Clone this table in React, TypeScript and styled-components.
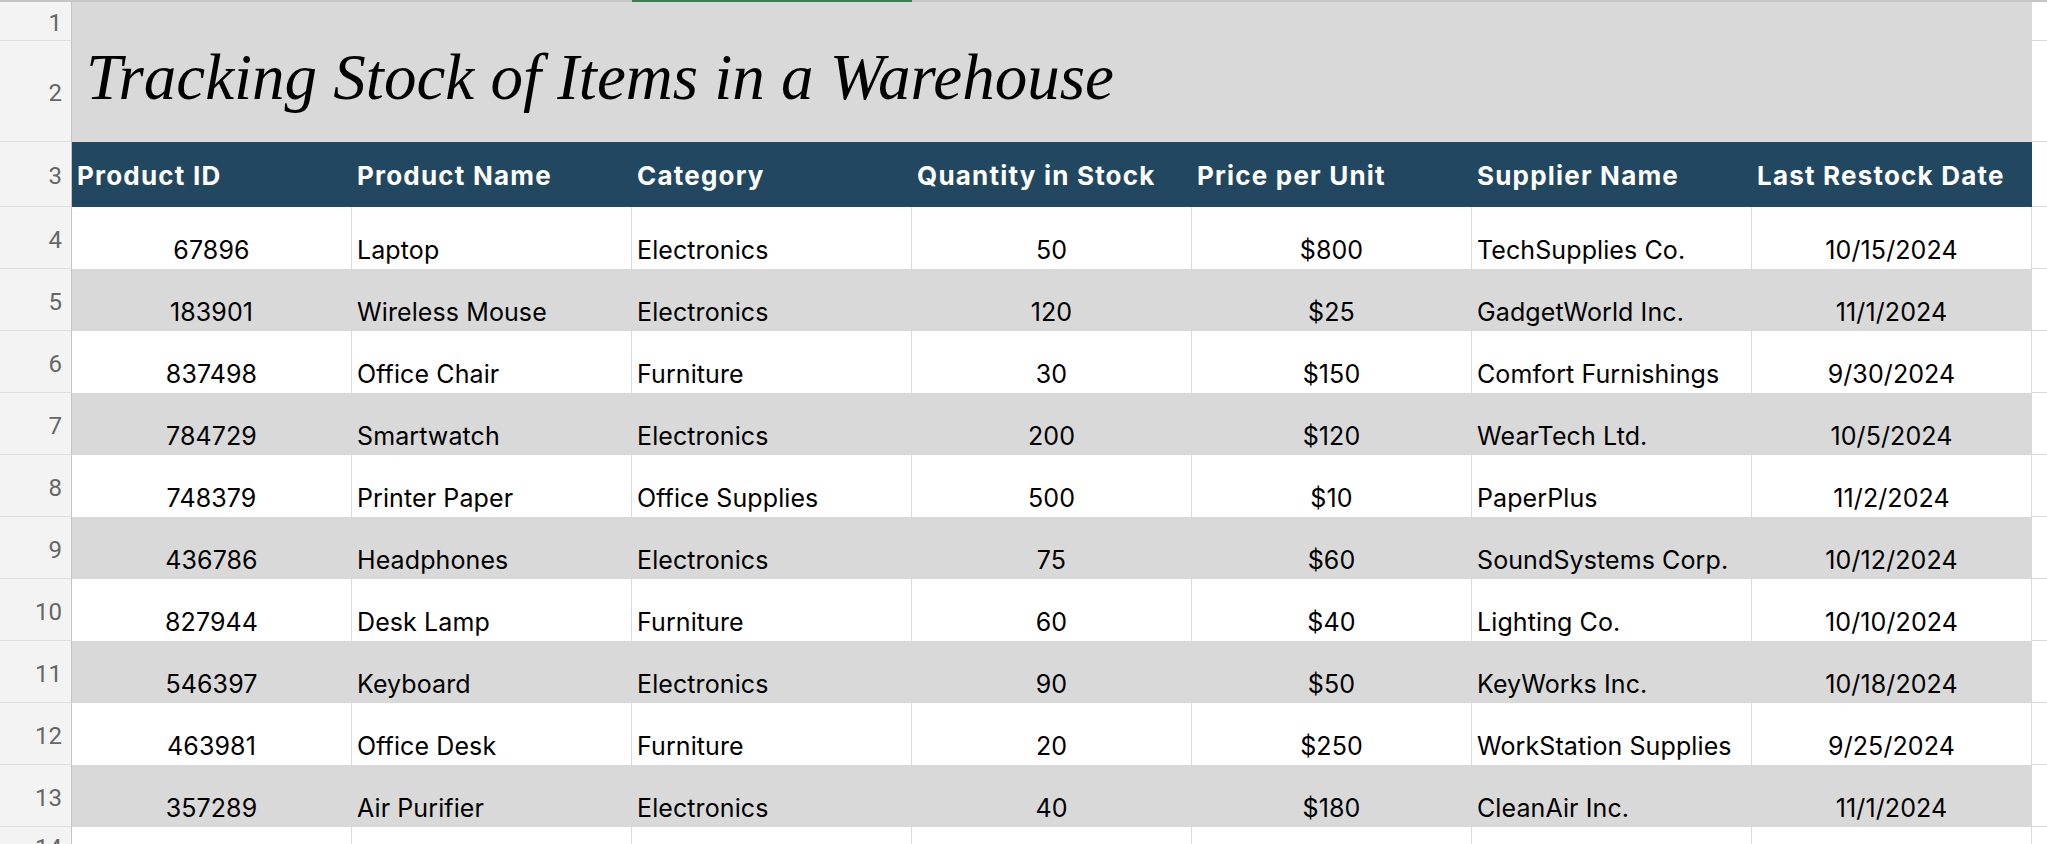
import React from "react";
import styled, { createGlobalStyle } from "styled-components";

const COLS = "72px repeat(7, 280px) 1fr";

const GlobalStyle = createGlobalStyle`
  * { box-sizing: border-box; }
  html, body {
    margin: 0;
    padding: 0;
    background: #ffffff;
    overflow: hidden;
  }
`;

const Sheet = styled.div`
  display: flex;
  flex-direction: column;
  height: 844px;
  overflow: hidden;
  background: #ffffff;
  color: #000000;
  font-family: Inter, "Open Sans", sans-serif;
`;

const ColumnStrip = styled.div`
  display: grid;
  grid-template-columns: ${COLS};
  flex: none;
  height: 2px;
  background: #c6c6c6;
`;

const StripSeg = styled.div<{ $active?: boolean }>`
  background: ${(p) => (p.$active ? "#3c7d4c" : "transparent")};
`;

const Row = styled.div<{ $h: number }>`
  display: grid;
  grid-template-columns: ${COLS};
  flex: none;
  height: ${(p) => p.$h}px;
`;

const RowHead = styled.div`
  display: flex;
  align-items: center;
  justify-content: flex-end;
  padding: 4px 9px 0 0;
  background: #f3f3f3;
  border-right: 1px solid #c4c4c4;
  border-bottom: 1px solid #dedede;
  color: #666666;
  font-family: Roboto, "Liberation Sans", sans-serif;
  font-size: 24px;
  line-height: 1;
`;

const Band = styled.div`
  grid-column: 2 / 9;
  display: flex;
  align-items: flex-start;
  padding: 4px 0 0 14px;
  background: #d9d9d9;
`;

const Title = styled.h1`
  margin: 0;
  font-family: "Liberation Serif", "Times New Roman", serif;
  font-style: italic;
  font-weight: 400;
  font-size: 65px;
  line-height: 1;
  white-space: nowrap;
`;

const Spare = styled.div`
  border-bottom: 1px solid #dadada;
`;

const HeadCell = styled.div`
  display: flex;
  align-items: center;
  padding: 2px 5px 0;
  background: #224761;
  color: #ffffff;
  font-size: 26px;
  font-weight: 700;
  letter-spacing: 1.2px;
  line-height: 1;
  white-space: nowrap;
`;

const Cell = styled.div<{ $align: string; $shade: boolean }>`
  display: flex;
  align-items: flex-end;
  justify-content: ${(p) => (p.$align === "center" ? "center" : "flex-start")};
  padding: 0 5px 6px;
  background: ${(p) => (p.$shade ? "#d9d9d9" : "#ffffff")};
  border-right: 1px solid ${(p) => (p.$shade ? "#d9d9d9" : "#dadada")};
  font-size: 25px;
  letter-spacing: 0.1px;
  line-height: 1;
  white-space: nowrap;
`;

const headers = [
  "Product ID",
  "Product Name",
  "Category",
  "Quantity in Stock",
  "Price per Unit",
  "Supplier Name",
  "Last Restock Date",
];

const aligns = ["center", "left", "left", "center", "center", "left", "center"];

const items = [
  ["67896", "Laptop", "Electronics", "50", "$800", "TechSupplies Co.", "10/15/2024"],
  ["183901", "Wireless Mouse", "Electronics", "120", "$25", "GadgetWorld Inc.", "11/1/2024"],
  ["837498", "Office Chair", "Furniture", "30", "$150", "Comfort Furnishings", "9/30/2024"],
  ["784729", "Smartwatch", "Electronics", "200", "$120", "WearTech Ltd.", "10/5/2024"],
  ["748379", "Printer Paper", "Office Supplies", "500", "$10", "PaperPlus", "11/2/2024"],
  ["436786", "Headphones", "Electronics", "75", "$60", "SoundSystems Corp.", "10/12/2024"],
  ["827944", "Desk Lamp", "Furniture", "60", "$40", "Lighting Co.", "10/10/2024"],
  ["546397", "Keyboard", "Electronics", "90", "$50", "KeyWorks Inc.", "10/18/2024"],
  ["463981", "Office Desk", "Furniture", "20", "$250", "WorkStation Supplies", "9/25/2024"],
  ["357289", "Air Purifier", "Electronics", "40", "$180", "CleanAir Inc.", "11/1/2024"],
];

export default function App() {
  return (
    <>
      <GlobalStyle />
      <Sheet>
        <ColumnStrip>
          <StripSeg />
          <StripSeg />
          <StripSeg />
          <StripSeg $active />
        </ColumnStrip>

        <Row $h={39}>
          <RowHead>1</RowHead>
          <Band />
          <Spare />
        </Row>

        <Row $h={101}>
          <RowHead>2</RowHead>
          <Band>
            <Title>Tracking Stock of Items in a Warehouse</Title>
          </Band>
          <Spare />
        </Row>

        <Row $h={65}>
          <RowHead>3</RowHead>
          {headers.map((h) => (
            <HeadCell key={h}>{h}</HeadCell>
          ))}
          <Spare />
        </Row>

        {items.map((row, i) => (
          <Row $h={62} key={row[0]}>
            <RowHead>{i + 4}</RowHead>
            {row.map((v, j) => (
              <Cell key={j} $align={aligns[j]} $shade={i % 2 === 1}>
                {v}
              </Cell>
            ))}
            <Spare />
          </Row>
        ))}

        <Row $h={39}>
          <RowHead>14</RowHead>
          {aligns.map((a, j) => (
            <Cell key={j} $align={a} $shade={false} />
          ))}
          <Spare />
        </Row>
      </Sheet>
    </>
  );
}
